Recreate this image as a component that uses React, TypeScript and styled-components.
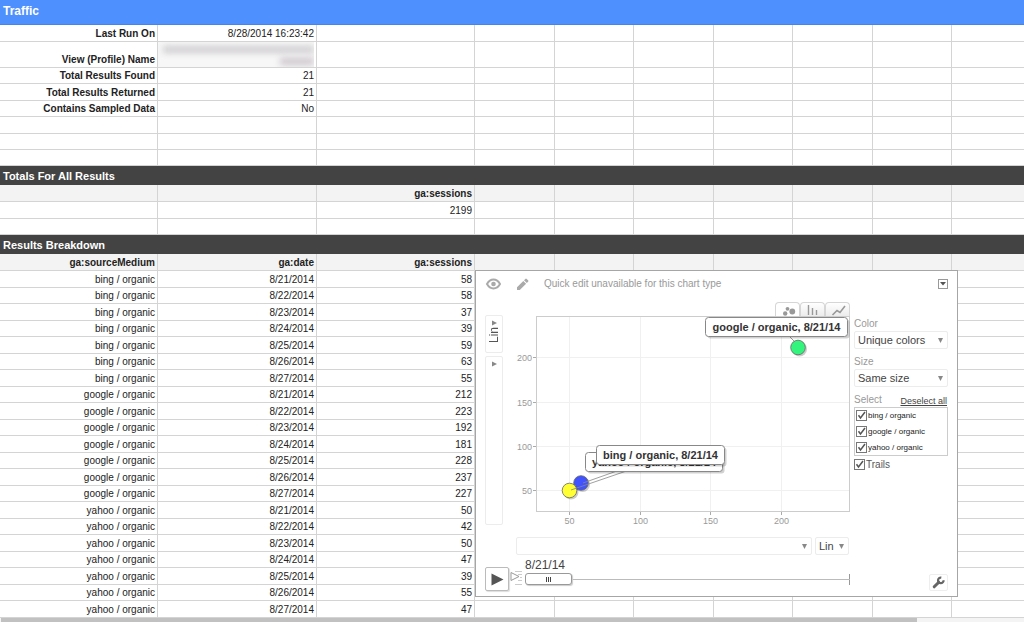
import React, { useState } from "react";
import styled, { createGlobalStyle } from "styled-components";

const GlobalStyle = createGlobalStyle`
  *, *::before, *::after { box-sizing: border-box; }
  body {
    margin: 0;
    background: #fff;
    color: #222;
    font: 10px/12px "Liberation Sans", Arial, sans-serif;
    overflow: hidden;
  }
  input, select, button { font: inherit; color: inherit; margin: 0; }
`;

/* ---------- sheet ---------- */

const Page = styled.main`
  position: relative;
`;

const Sheet = styled.table`
  width: 100%;
  table-layout: fixed;
  border-collapse: separate;
  border-spacing: 0;
`;

const Row = styled.tr<{ $height: number; $shaded?: boolean }>`
  height: ${(p) => p.$height}px;
  background: ${(p) => (p.$shaded ? "#f3f3f3" : "#fff")};
`;

const Cell = styled.td<{ $bold?: boolean }>`
  padding: 0 2px 0 0;
  border-right: 1px solid #d4d4d4;
  border-bottom: 1px solid #d4d4d4;
  text-align: right;
  vertical-align: bottom;
  line-height: 15px;
  font-weight: ${(p) => (p.$bold ? "bold" : "normal")};
  white-space: nowrap;
  &:last-child { border-right: 0; }
`;

const TitleCell = styled.th`
  padding: 0 3px 2px;
  background: #4d90fe;
  border-bottom: 1px solid #4683ea;
  color: #fff;
  font-size: 12px;
  line-height: 14px;
  text-align: left;
`;

const SectionCell = styled.th`
  padding: 0 3px;
  background: #434343;
  color: #fff;
  font-size: 11px;
  line-height: 14px;
  text-align: left;
`;

const Redacted = styled.div`
  display: flex;
  flex-direction: column;
  align-items: flex-end;
  gap: 5px;
  height: 25px;
  padding: 4px 0 2px 5px;
  overflow: hidden;
  background: #f7f7f7;
`;

const Smudge = styled.div<{ $width: string; $color: string }>`
  width: ${(p) => p.$width};
  height: 7px;
  background: ${(p) => p.$color};
  filter: blur(3px);
`;

const ScrollTrack = styled.div`
  height: 4px;
  padding-left: 1px;
  background: #f4f4f4;
`;

const ScrollThumb = styled.div`
  width: 90%;
  max-width: 916px;
  height: 4px;
  background: #c1c1c1;
`;

/* ---------- chart window ---------- */

const ChartWindow = styled.section`
  position: absolute;
  left: 475px;
  top: 270px;
  width: 483px;
  height: 327px;
  border: 1px solid #a6a6a6;
  background: #fff;
  padding: 0 9px;
`;

const Toolbar = styled.header`
  display: flex;
  align-items: center;
  height: 26px;
  color: #999;
`;

const IconButton = styled.button<{ $gap?: number }>`
  display: flex;
  padding: 0;
  margin-right: ${(p) => p.$gap ?? 0}px;
  border: 0;
  background: none;
  color: #aaa;
`;

const MenuButton = styled.button`
  display: flex;
  align-items: center;
  justify-content: center;
  width: 10px;
  height: 10px;
  margin-left: auto;
  padding: 0;
  border: 1px solid #999;
  background: #fff;
`;

const Body = styled.div`
  display: grid;
  grid-template-columns: 18px 1fr 94px;
  padding-top: 5px;
`;

const AxisColumn = styled.div`
  display: flex;
  flex-direction: column;
  gap: 3px;
  padding-top: 13px;
`;

const VerticalBox = styled.label<{ $height: number }>`
  display: flex;
  flex-direction: column;
  align-items: center;
  height: ${(p) => p.$height}px;
  padding: 4px 0;
  border: 1px solid #ececec;
  border-radius: 2px;
`;

const VerticalSelect = styled.select`
  appearance: none;
  writing-mode: vertical-rl;
  transform: rotate(180deg);
  flex: 1;
  width: 14px;
  min-height: 0;
  padding: 0 0 1px;
  border: 0;
  background: none;
  color: #555;
  font-size: 12px;
  line-height: 14px;
  text-align: right;
`;

const PlotColumn = styled.div`
  display: flex;
  flex-direction: column;
  min-width: 0;
  margin-right: 4px;
`;

const Tabs = styled.div`
  display: flex;
  justify-content: flex-end;
  height: 14px;
`;

const Tab = styled.button<{ $active?: boolean }>`
  display: flex;
  align-items: flex-end;
  justify-content: flex-end;
  width: 25px;
  padding: 0 3px 0 0;
  border: 1px solid #d6d6d6;
  border-bottom: 0;
  border-radius: 4px 4px 0 0;
  background: ${(p) => (p.$active ? "#fff" : "linear-gradient(#fff, #ececec)")};
`;

const Plot = styled.svg`
  display: block;
  width: 347px;
  height: 213px;
  font-size: 9px;
  overflow: visible;
`;

const Side = styled.div`
  display: flex;
  flex-direction: column;
  padding-top: 15px;
`;

const FieldLabel = styled.label`
  color: #999;
  line-height: 14px;
`;

const SelectBox = styled.div<{ $grow?: boolean; $gap?: number }>`
  display: grid;
  grid-template-columns: 1fr;
  align-items: center;
  flex: ${(p) => (p.$grow ? "1" : "none")};
  height: 18px;
  margin-bottom: ${(p) => p.$gap ?? 0}px;
  border: 1px solid #ececec;
  border-radius: 2px;
  > * { grid-area: 1 / 1; }
  > svg { justify-self: end; margin-right: 3px; pointer-events: none; }
`;

const Select = styled.select`
  appearance: none;
  width: 100%;
  height: 16px;
  padding: 0 12px 0 3px;
  border: 0;
  background: none;
  color: #444;
  font-size: 11px;
  line-height: 16px;
`;

const SelectHead = styled.div`
  display: flex;
  justify-content: space-between;
  align-items: flex-end;
  padding-right: 1px;
`;

const DeselectLink = styled.a`
  color: #444;
  font-size: 9px;
  line-height: 11px;
`;

const CheckList = styled.div`
  display: flex;
  flex-direction: column;
  gap: 5px;
  margin-bottom: 3px;
  padding: 2px 2px 2px 1px;
  border: 1px solid #ccc;
`;

const CheckLabel = styled.label<{ $small?: boolean }>`
  display: flex;
  align-items: center;
  gap: 1px;
  color: ${(p) => (p.$small ? "#222" : "#555")};
  font-size: ${(p) => (p.$small ? 8 : 10)}px;
  line-height: 11px;
  white-space: nowrap;
`;

const CheckFrame = styled.span`
  display: grid;
  width: 11px;
  height: 11px;
  > * { grid-area: 1 / 1; }
  > svg { pointer-events: none; }
`;

const CheckInput = styled.input`
  appearance: none;
  width: 11px;
  height: 11px;
  border: 1px solid #777;
  background: #fff;
`;

const XAxisRow = styled.div`
  display: flex;
  gap: 3px;
  margin: 8px 99px 0 31px;
`;

const LinBox = styled(SelectBox)`
  width: 34px;
`;

const PlayRow = styled.div`
  display: flex;
  align-items: flex-end;
  height: 36px;
`;

const PlayButton = styled.button`
  display: flex;
  align-items: center;
  justify-content: center;
  width: 24px;
  height: 24px;
  margin-right: 1px;
  padding: 0;
  border: 1px solid #bbb;
  border-radius: 2px;
  background: #fff;
  box-shadow: 1px 1px 1px #ddd;
`;

const SpeedIcon = styled.svg`
  margin: 0 2px 4px 0;
`;

const Timeline = styled.div`
  display: flex;
  flex-direction: column;
  flex: 1;
  height: 33px;
`;

const DateLabel = styled.label`
  color: #444;
  font-size: 12px;
  line-height: 14px;
`;

const Range = styled.input`
  appearance: none;
  width: 100%;
  height: 14px;
  background: linear-gradient(#bbb, #bbb) 0 7px / 100% 1px no-repeat,
    linear-gradient(#999, #999) 100% 2px / 1px 11px no-repeat;
  &::-webkit-slider-thumb {
    appearance: none;
    width: 47px;
    height: 12px;
    border: 1px solid #999;
    border-radius: 3px;
    background: repeating-linear-gradient(90deg, #444 0 1px, #fff 1px 2px) center / 5px 5px no-repeat #fff;
    box-shadow: 1px 1px 1px #ccc;
  }
`;

const SettingsButton = styled.button`
  display: flex;
  align-items: center;
  justify-content: center;
  width: 19px;
  height: 17px;
  margin-left: 79px;
  padding: 0;
  border: 1px solid #eee;
  border-radius: 2px;
  background: #fff;
  color: #666;
`;

/* ---------- data ---------- */

const columns = [158, 159, 158, 80, 79, 80, 79, 80, 79];

type SheetCell = React.ReactNode;

const summary: { height: number; cells: SheetCell[] }[] = [
  { height: 17, cells: ["Last Run On", "8/28/2014 16:23:42"] },
  {
    height: 26,
    cells: [
      "View (Profile) Name",
      <Redacted>
        <Smudge $width="100%" $color="#cfcdd0" />
        <Smudge $width="34px" $color="#cdc6cc" />
      </Redacted>,
    ],
  },
  { height: 16, cells: ["Total Results Found", "21"] },
  { height: 17, cells: ["Total Results Returned", "21"] },
  { height: 16, cells: ["Contains Sampled Data", "No"] },
  { height: 17, cells: [] },
  { height: 16, cells: [] },
  { height: 16, cells: [] },
];

const sessions: [string, number[]][] = [
  ["bing / organic", [58, 58, 37, 39, 59, 63, 55]],
  ["google / organic", [212, 223, 192, 181, 228, 237, 227]],
  ["yahoo / organic", [50, 42, 50, 47, 39, 55, 47]],
];

const breakdown = sessions.flatMap(([source, values]) =>
  values.map((v, i) => [source, `8/${21 + i}/2014`, String(v)])
);

const xTicks: [number, number][] = [[50, 66], [100, 137], [150, 207], [200, 278]];
const yTicks: [number, number][] = [[200, 41], [150, 86], [100, 130], [50, 174]];

/* ---------- parts ---------- */

function SheetRow({ height, cells, shaded, bold, boldFirst }: {
  height: number; cells: SheetCell[]; shaded?: boolean; bold?: boolean; boldFirst?: boolean;
}) {
  return (
    <Row $height={height} $shaded={shaded}>
      {Array.from({ length: columns.length + 1 }, (_, i) => (
        <Cell key={i} $bold={bold || (boldFirst && i === 0)}>{cells[i]}</Cell>
      ))}
    </Row>
  );
}

const DownArrow = () => (
  <svg width="7" height="7" viewBox="0 0 7 7" aria-hidden="true"><path d="M1 1h5L3.5 6z" fill="#888" /></svg>
);

const RightArrow = () => (
  <svg width="7" height="6" viewBox="0 0 7 6" aria-hidden="true"><path d="M1 .5v5L6 3z" fill="#888" /></svg>
);

const EyeIcon = () => (
  <svg width="16" height="12" viewBox="0 0 16 12" fill="none">
    <path d="M2 6C4 2.4 6 1.6 8.500 1.600S13 2.400 15 6C13 9.600 11 10.400 8.500 10.400S4 9.600 2 6z" stroke="#aaa" strokeWidth="2" />
    <circle cx="8.500" cy="6" r="2.300" fill="#aaa" />
  </svg>
);

const PencilIcon = () => (
  <svg width="13" height="13" viewBox="0 0 13 13" fill="#aaa">
    <path d="M1 12V9.200L7.300 2.900 10.100 5.700 3.800 12zM8 2.200 9.300.900a1 1 0 0 1 1.400 0L12.100 2.300a1 1 0 0 1 0 1.400L10.800 5z" />
  </svg>
);

const WrenchIcon = () => (
  <svg width="13" height="13" viewBox="0 0 13 13" fill="none" stroke="currentColor">
    <path d="M2.200 10.800 6.800 6.200" strokeWidth="3" strokeLinecap="round" />
    <path d="M9.300 1.600A2.800 2.800 0 1 0 11.600 4.200" strokeWidth="2.200" />
  </svg>
);

function Check({ label, small }: { label: string; small?: boolean }) {
  const [on, setOn] = useState(true);
  return (
    <CheckLabel $small={small}>
      <CheckFrame>
        <CheckInput type="checkbox" checked={on} onChange={() => setOn(!on)} />
        {on && (
          <svg width="11" height="11" viewBox="0 0 11 11" aria-hidden="true">
            <path d="M2.500 5.200 4.500 8 9 2" fill="none" stroke="#555" strokeWidth="1.500" />
          </svg>
        )}
      </CheckFrame>
      {label}
    </CheckLabel>
  );
}

function Bubble({ x, y, color }: { x: number; y: number; color: string }) {
  return (
    <>
      <circle cx={x + 1.5} cy={y + 1.5} r="7.5" fill="#000" opacity=".2" />
      <circle cx={x} cy={y} r="7.3" fill={color} stroke="#666" strokeWidth=".8" />
    </>
  );
}

function Callout({ x, y, width, text }: { x: number; y: number; width: number; text: string }) {
  return (
    <>
      <rect x={x + 2} y={y + 2} width={width} height="19" rx="3" fill="#000" opacity=".18" />
      <rect x={x} y={y} width={width} height="19" rx="3" fill="#fff" stroke="#888" />
      <text x={x + width / 2} y={y + 13} textAnchor="middle" fontSize="11" fontWeight="bold" fill="#333">{text}</text>
    </>
  );
}

function BubblePlot() {
  return (
    <Plot viewBox="0 0 347 213" role="img" aria-label="Sessions by source">
      {xTicks.map(([v, x]) => (
        <g key={v}>
          <path d={`M${x + 0.5} 0V195`} stroke="#f0f0f0" />
          <path d={`M${x + 0.5} 196v3`} stroke="#aaa" />
          <text x={x + 0.5} y="208" textAnchor="middle" fill="#999">{v}</text>
        </g>
      ))}
      {yTicks.map(([v, y]) => (
        <g key={v}>
          <path d={`M33 ${y + 0.5}H346`} stroke="#f0f0f0" />
          <path d={`M30 ${y + 0.5}h3`} stroke="#aaa" />
          <text x="29" y={y + 4} textAnchor="end" fill="#999">{v}</text>
        </g>
      ))}
      <rect x="33.5" y=".5" width="313" height="195" fill="none" stroke="#ccc" />
      <path d="M284 18 292 26" stroke="#999" />
      <Bubble x={295} y={31.5} color="#33f57d" />
      <Bubble x={78} y={167} color="#4053ff" />
      <Bubble x={66.5} y={174.5} color="#ffff33" />
      <path d="M80 167 128 150M68 174 138 150" stroke="#888" strokeWidth=".8" />
      <Callout x={202.5} y={1.5} width={142} text="google / organic, 8/21/14" />
      <Callout x={82.5} y={136.5} width={137} text="yahoo / organic, 8/21/14" />
      <Callout x={93.5} y={129.5} width={128} text="bing / organic, 8/21/14" />
    </Plot>
  );
}

function MotionChart() {
  const [day, setDay] = useState(0);
  return (
    <ChartWindow>
      <Toolbar>
        <IconButton $gap={15} aria-label="View"><EyeIcon /></IconButton>
        <IconButton $gap={15} aria-label="Edit"><PencilIcon /></IconButton>
        Quick edit unavailable for this chart type
        <MenuButton aria-label="Chart menu">
          <svg width="6" height="4" viewBox="0 0 6 4"><path d="M0 0h6L3 3.500z" fill="#555" /></svg>
        </MenuButton>
      </Toolbar>
      <Body>
        <AxisColumn>
          <VerticalBox $height={38}>
            <RightArrow />
            <VerticalSelect aria-label="Y axis scale"><option>Lin</option><option>Log</option></VerticalSelect>
          </VerticalBox>
          <VerticalBox $height={169}>
            <RightArrow />
            <VerticalSelect aria-label="Y axis"><option></option></VerticalSelect>
          </VerticalBox>
        </AxisColumn>
        <PlotColumn>
          <Tabs>
            <Tab $active aria-label="Bubble chart">
              <svg width="14" height="12" viewBox="0 0 14 12" fill="#999">
                <circle cx="3.200" cy="9.500" r="2.200" /><circle cx="5.500" cy="4.800" r="1.900" /><circle cx="10.300" cy="7.500" r="2.900" />
              </svg>
            </Tab>
            <Tab aria-label="Bar chart">
              <svg width="15" height="12" viewBox="0 0 15 12" fill="none" stroke="#999" strokeWidth="1.4">
                <path d="M2.500 1v10M6.500 4v7M10.500 6v5" />
              </svg>
            </Tab>
            <Tab aria-label="Line chart">
              <svg width="15" height="12" viewBox="0 0 15 12" fill="none" stroke="#999" strokeWidth="1.6">
                <path d="M1.500 11 6 6.500l3 2 5-6.500" />
              </svg>
            </Tab>
          </Tabs>
          <BubblePlot />
        </PlotColumn>
        <Side>
          <FieldLabel htmlFor="color">Color</FieldLabel>
          <SelectBox $gap={6}>
            <Select id="color"><option>Unique colors</option></Select>
            <DownArrow />
          </SelectBox>
          <FieldLabel htmlFor="size">Size</FieldLabel>
          <SelectBox $gap={6}>
            <Select id="size"><option>Same size</option></Select>
            <DownArrow />
          </SelectBox>
          <SelectHead>
            <FieldLabel as="span">Select</FieldLabel>
            <DeselectLink href="#">Deselect all</DeselectLink>
          </SelectHead>
          <CheckList>
            {sessions.map(([source]) => <Check key={source} label={source} small />)}
          </CheckList>
          <Check label="Trails" />
        </Side>
      </Body>
      <XAxisRow>
        <SelectBox $grow>
          <Select aria-label="X axis"><option></option></Select>
          <DownArrow />
        </SelectBox>
        <LinBox>
          <Select aria-label="X axis scale"><option>Lin</option><option>Log</option></Select>
          <DownArrow />
        </LinBox>
      </XAxisRow>
      <PlayRow>
        <PlayButton aria-label="Play">
          <svg width="13" height="13" viewBox="0 0 13 13"><path d="M.5.5v12l12-6z" fill="#555" /></svg>
        </PlayButton>
        <SpeedIcon width="13" height="17" viewBox="0 0 13 17" fill="none">
          <path d="M5 1.500h7M8 4.500h4M10 7.500h2M8 10.500h4M5 14.500h7" stroke="#ccc" />
          <path d="M1 2.500v8l8-4z" fill="#fff" stroke="#999" />
        </SpeedIcon>
        <Timeline>
          <DateLabel htmlFor="day">{`8/${21 + day}/14`}</DateLabel>
          <Range id="day" type="range" min={0} max={6} value={day} onChange={(e) => setDay(Number(e.target.value))} />
        </Timeline>
        <SettingsButton aria-label="Settings"><WrenchIcon /></SettingsButton>
      </PlayRow>
    </ChartWindow>
  );
}

export default function App() {
  const span = columns.length + 1;
  return (
    <Page>
      <GlobalStyle />
      <Sheet>
        <colgroup>
          {columns.map((w, i) => <col key={i} width={w} />)}
          <col />
        </colgroup>
        <tbody>
          <Row $height={25}><TitleCell colSpan={span}>Traffic</TitleCell></Row>
          {summary.map((r, i) => <SheetRow key={i} height={r.height} cells={r.cells} boldFirst />)}
          <Row $height={19}><SectionCell colSpan={span}>Totals For All Results</SectionCell></Row>
          <SheetRow height={17} shaded bold cells={["", "", "ga:sessions"]} />
          <SheetRow height={17} cells={["", "", "2199"]} />
          <SheetRow height={16} cells={[]} />
          <Row $height={19}><SectionCell colSpan={span}>Results Breakdown</SectionCell></Row>
          <SheetRow height={17} shaded bold cells={["ga:sourceMedium", "ga:date", "ga:sessions"]} />
          {breakdown.map((cells, i) => (
            <SheetRow key={i} height={i % 2 ? 16 : 17} cells={cells} />
          ))}
        </tbody>
      </Sheet>
      <ScrollTrack><ScrollThumb /></ScrollTrack>
      <MotionChart />
    </Page>
  );
}
